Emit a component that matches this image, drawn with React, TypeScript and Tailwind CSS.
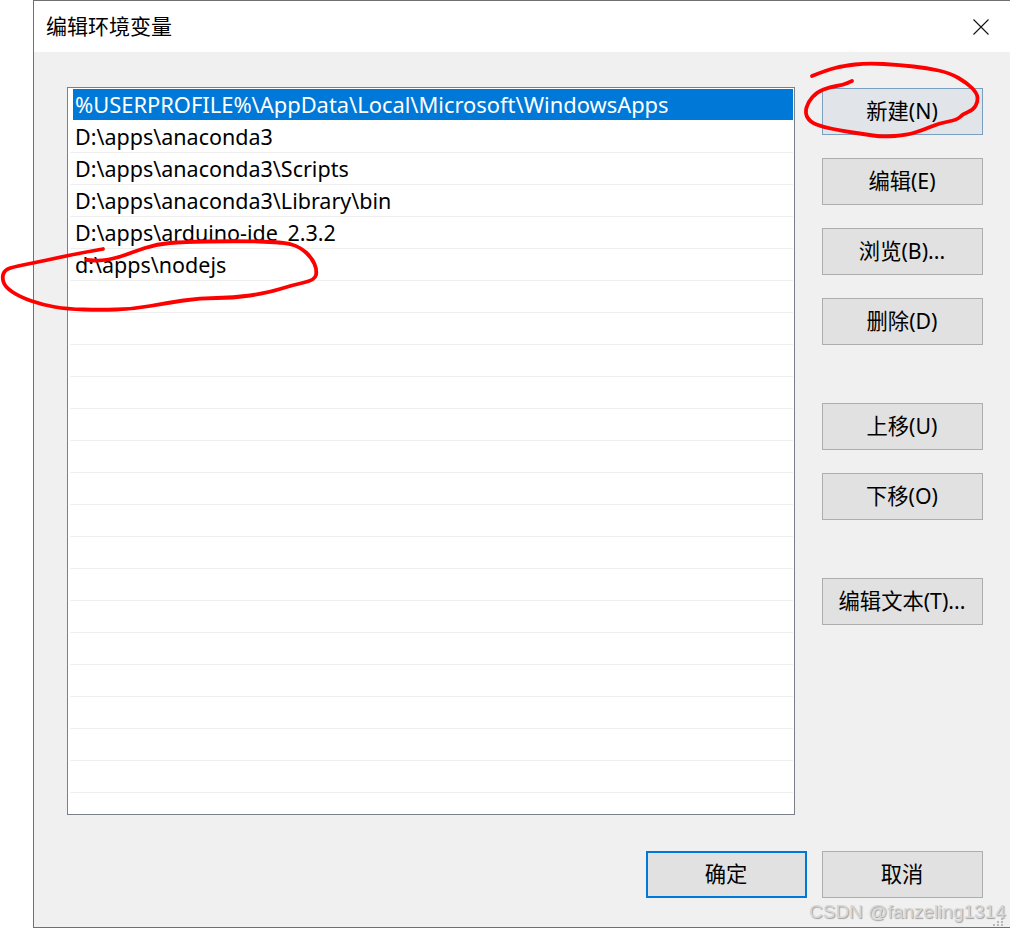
import React from 'react';

const paths = [
  '%USERPROFILE%\\AppData\\Local\\Microsoft\\WindowsApps',
  'D:\\apps\\anaconda3',
  'D:\\apps\\anaconda3\\Scripts',
  'D:\\apps\\anaconda3\\Library\\bin',
  'D:\\apps\\arduino-ide_2.3.2',
  'd:\\apps\\nodejs',
  '', '', '', '', '', '', '', '', '', '', '', '', '', '', '', '',
];

// hand-drawn marker strokes, traced from the screenshot
const nodeMark: number[][] = [
  [103, 249], [80, 253], [57, 258], [33, 263], [13, 267], [5, 270], [2, 277], [5, 287], [20, 297], [43, 305],
  [67, 309], [100, 310], [133, 309], [167, 303], [200, 298], [233, 298], [267, 293], [293, 285], [315, 280],
  [317, 270], [312, 258], [300, 247], [283, 242], [233, 241], [183, 242], [157, 244], [133, 252], [117, 258],
  [100, 261], [87, 260],
];
const newMark: number[][] = [
  [812, 76], [827, 70], [843, 66], [867, 63], [900, 65], [927, 68], [950, 73], [967, 83], [977, 93], [978, 102],
  [973, 110], [963, 114], [957, 120], [940, 123], [923, 130], [907, 135], [883, 137], [863, 134], [843, 131],
  [823, 127], [810, 122], [805, 113], [808, 102], [817, 92], [830, 87], [843, 85], [852, 81],
];

const smooth = (pts: number[][]) => {
  let d = `M${pts[0][0]} ${pts[0][1]}`;
  for (let i = 1; i < pts.length - 1; i++) {
    const mx = (pts[i][0] + pts[i + 1][0]) / 2;
    const my = (pts[i][1] + pts[i + 1][1]) / 2;
    d += `Q${pts[i][0]} ${pts[i][1]} ${mx} ${my}`;
  }
  const last = pts[pts.length - 1];
  return d + `L${last[0]} ${last[1]}`;
};

const Btn = ({ label, className = 'border border-[#adadad] bg-[#e1e1e1]' }: { label: string; className?: string }) => (
  <button className={`h-[47px] w-[161px] pb-[2px] pr-[1px] text-[21.3px] text-black ${className}`}>{label}</button>
);

export default function App() {
  return (
    <div className="relative h-[928px] w-[1010px] overflow-hidden bg-white font-['Noto_Sans','Noto_Sans_CJK_SC',sans-serif]">
      <div className="ml-[33px] flex h-[928px] w-[977px] flex-col border-b border-l border-t border-[#707070]">
        {/* title bar */}
        <div className="flex h-[51px] shrink-0 items-center justify-between bg-white pl-[12px] pr-[21px]">
          <span className="text-[21px] text-black">编辑环境变量</span>
          <svg width="16" height="16" viewBox="0 0 16 16">
            <path d="M0.5 0.5L15.5 15.5M15.5 0.5L0.5 15.5" stroke="#111" strokeWidth="1.1" fill="none" />
          </svg>
        </div>

        <div className="flex flex-1 flex-col bg-[#f0f0f0] pl-[33px] pr-[27px]">
          <div className="mt-[35px] flex justify-between">
            {/* list */}
            <div className="h-[728px] w-[728px] overflow-hidden border border-[#7a7f88] bg-white px-[1px] pt-[1px]">
              {paths.map((p, i) => (
                <div
                  key={i}
                  className={
                    i === 0
                      ? 'mb-[1px] ml-[4px] h-[31px] bg-[#0078d7] pl-[2px] text-[21.9px] leading-[31px] whitespace-nowrap text-white'
                      : 'ml-[1px] h-[32px] border-b border-[#efefef] pl-[5px] text-[21.5px] leading-[31px] whitespace-nowrap text-black'
                  }
                >
                  {p}
                </div>
              ))}
            </div>

            {/* side buttons */}
            <div className="flex w-[161px] flex-col gap-[23px] pt-[1px]">
              <Btn label="新建(N)" className="border border-[#7a9fbf] bg-[#e1e4e8]" />
              <Btn label="编辑(E)" />
              <Btn label="浏览(B)..." />
              <Btn label="删除(D)" />
              <div className="mt-[35px] flex flex-col gap-[23px]">
                <Btn label="上移(U)" />
                <Btn label="下移(O)" />
              </div>
              <div className="mt-[35px]">
                <Btn label="编辑文本(T)..." />
              </div>
            </div>
          </div>

          <div className="mt-[36px] flex justify-end gap-[15px]">
            <Btn label="确定" className="border-2 border-[#0078d7] bg-[#e1e1e1]" />
            <Btn label="取消" />
          </div>
        </div>
      </div>

      {/* watermark */}
      <span className="absolute left-[809px] top-[898px] font-['Liberation_Sans',sans-serif] text-[19px] whitespace-nowrap text-[#d6d6d6] [text-shadow:1px_1px_1px_#a0a0a0]">
        CSDN @fanzeling1314
      </span>
      <svg className="absolute left-[993px] top-[918px]" width="12" height="8" viewBox="0 0 12 8" fill="#b8b8b8">
        <rect x="8" y="0" width="2" height="2" />
        <rect x="4" y="3" width="2" height="2" />
        <rect x="8" y="3" width="2" height="2" />
        <rect x="0" y="6" width="2" height="2" />
        <rect x="4" y="6" width="2" height="2" />
        <rect x="8" y="6" width="2" height="2" />
      </svg>

      {/* red marker scribbles */}
      <svg className="pointer-events-none absolute left-0 top-0" width="1010" height="928" fill="none">
        <path d={smooth(nodeMark)} stroke="#fe0000" strokeWidth="3.8" strokeLinecap="round" strokeLinejoin="round" />
        <path d={smooth(newMark)} stroke="#fe0000" strokeWidth="3.8" strokeLinecap="round" strokeLinejoin="round" />
      </svg>
    </div>
  );
}
